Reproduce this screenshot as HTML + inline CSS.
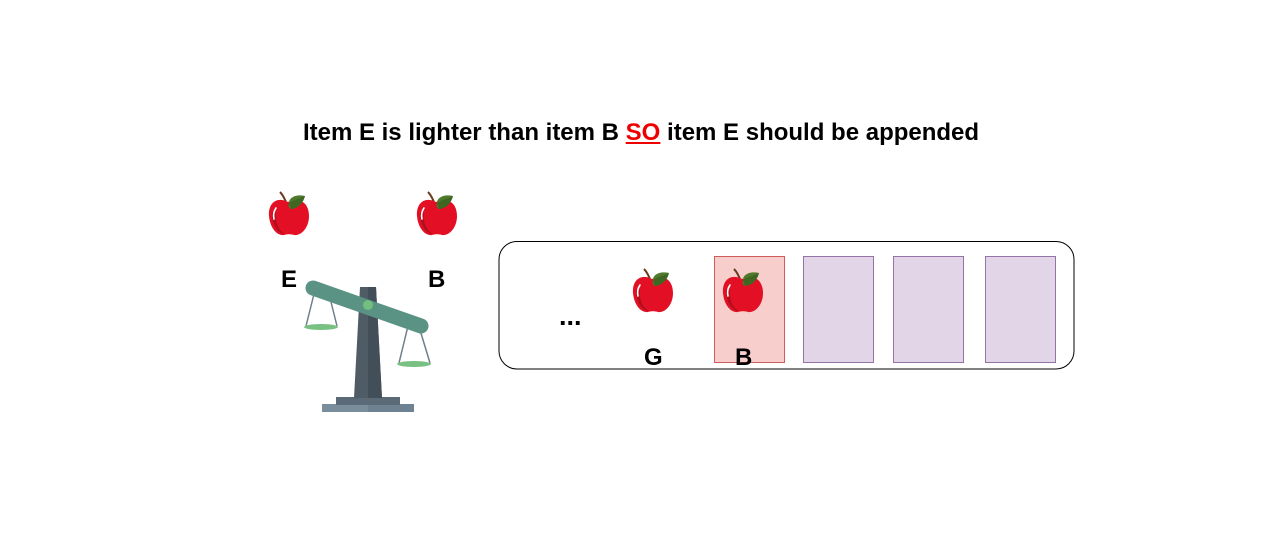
<!DOCTYPE html>
<html><head><meta charset="utf-8"><style>
html,body{margin:0;padding:0;background:#fff;width:1282px;height:542px;overflow:hidden;position:relative;font-family:"Liberation Sans",sans-serif}
.t{position:absolute;font-weight:bold;color:#000}
svg{position:absolute;overflow:visible}
</style></head><body>
<svg width="0" height="0" style="position:absolute">
<defs>
<symbol id="apple" viewBox="0 0 44 46">
<path d="M20 14 C18 8 16 4 13 1" stroke="#6b3a1e" stroke-width="2" fill="none"/>
<path d="M21 11 C10 5 1 12 2 25 C3 37 10 45 17 44 C20 43 24 43 27 44 C34 45 42 37 42 25 C42 11 32 6 21 11Z" fill="#e30f25"/>
<path d="M5 22 C5 34 11 43 18 43 C12 40 8 32 9 22Z" fill="#b0101e"/>
<path d="M9 17 C7 20 6 24 7 28" stroke="#fff" stroke-width="1.6" fill="none" stroke-linecap="round"/>
<path d="M22 12 C22 6 30 3 38 5 C36 12 32 17 24 18 C22 17 21 15 22 12Z" fill="#4f7a2c"/>
<path d="M22 12 C26 9 32 8 38 5 C36 12 32 17 24 18Z" fill="#3f6622"/>
</symbol>
</defs></svg>

<div class="t" style="left:0;width:1282px;top:119px;text-align:center;font-size:24px;line-height:28px">Item E is lighter than item B <span style="color:#e00;text-decoration:underline">SO</span> item E should be appended</div>

<svg style="left:267px;top:191px" width="44" height="46"><use href="#apple"/></svg>
<svg style="left:415px;top:191px" width="44" height="46"><use href="#apple"/></svg>
<div class="t" style="left:281px;top:266px;font-size:24px">E</div>
<div class="t" style="left:428px;top:266px;font-size:24px">B</div>

<svg style="left:0;top:0" width="1282" height="542">
<rect x="322" y="404" width="92" height="8" fill="#6e8291"/>
<rect x="322" y="404" width="46" height="8" fill="#7a8d9b"/>
<rect x="336" y="397" width="64" height="8" fill="#5a6a77"/>
<polygon points="360,287 376,287 382,398 354,398" fill="#4f5c66"/>
<polygon points="368,287 376,287 382,398 368,398" fill="#434f58"/>
<line x1="315" y1="290" x2="306" y2="326" stroke="#6e7f8a" stroke-width="1.5"/>
<line x1="329" y1="294" x2="337" y2="326" stroke="#6e7f8a" stroke-width="1.5"/>
<ellipse cx="321" cy="327" rx="17" ry="3" fill="#79c083"/>
<line x1="408" y1="326" x2="399" y2="363" stroke="#6e7f8a" stroke-width="1.5"/>
<line x1="420" y1="330" x2="430" y2="363" stroke="#6e7f8a" stroke-width="1.5"/>
<ellipse cx="414" cy="364" rx="17" ry="3" fill="#79c083"/>
<line x1="313" y1="288" x2="421" y2="326" stroke="#5a9283" stroke-width="15" stroke-linecap="round"/>
<circle cx="368" cy="305" r="5" fill="#72bf7f"/>

<rect x="499" y="241.5" width="575" height="127.5" rx="18" fill="none" stroke="#000" stroke-width="1"/>
<rect x="714.5" y="256.5" width="70" height="106" fill="#f8cecc" stroke="#cf5c5a" stroke-width="1"/>
<rect x="803.5" y="256.5" width="70" height="106" fill="#e1d5e7" stroke="#9673a6" stroke-width="1"/>
<rect x="893.5" y="256.5" width="70" height="106" fill="#e1d5e7" stroke="#9673a6" stroke-width="1"/>
<rect x="985.5" y="256.5" width="70" height="106" fill="#e1d5e7" stroke="#9673a6" stroke-width="1"/>
</svg>

<svg style="left:631px;top:268px" width="44" height="46"><use href="#apple"/></svg>
<svg style="left:721px;top:268px" width="44" height="46"><use href="#apple"/></svg>
<div class="t" style="left:559px;top:301px;font-size:27px">...</div>
<div class="t" style="left:644px;top:344px;font-size:24px">G</div>
<div class="t" style="left:735px;top:344px;font-size:24px">B</div>
</body></html>
